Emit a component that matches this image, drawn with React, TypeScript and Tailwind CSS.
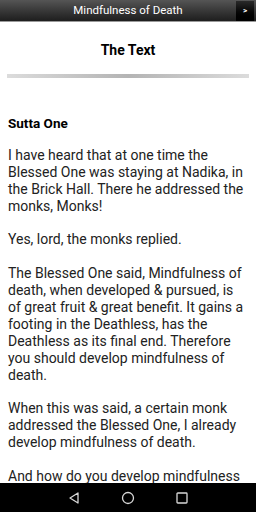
export default function App() {
  const paragraphs = [
    'I have heard that at one time the Blessed One was staying at Nadika, in the Brick Hall. There he addressed the monks, Monks!',
    'Yes, lord, the monks replied.',
    'The Blessed One said, Mindfulness of death, when developed & pursued, is of great fruit & great benefit. It gains a footing in the Deathless, has the Deathless as its final end. Therefore you should develop mindfulness of death.',
    'When this was said, a certain monk addressed the Blessed One, I already develop mindfulness of death.',
    'And how do you develop mindfulness of death?',
  ];

  return (
    <div className="flex h-[512px] w-[256px] flex-col overflow-hidden bg-white font-['Roboto',sans-serif]">
      <div className="relative flex h-[22px] shrink-0 items-center justify-center border-b border-[#9a9a9a] bg-gradient-to-b from-[#555555] to-[#1e1e1e]">
        <span className="text-[11.5px] leading-none text-white">Mindfulness of Death</span>
        <button className="absolute right-[2px] top-[1px] flex h-[20px] w-[18px] items-center justify-center bg-gradient-to-b from-[#2a2a2a] to-[#000000] text-[8px] font-bold text-white">
          &gt;
        </button>
      </div>

      <div className="flex-1 overflow-hidden">
        <h1 className="pt-[19px] text-center text-[14px] font-bold leading-[18px] text-black">The Text</h1>
        <div className="mx-[7px] mt-[15px] h-[4px] bg-gradient-to-r from-[#dcdcdc] via-[#b4b4b4] to-[#dcdcdc]" />

        <div className="px-[8px] pt-[37px] text-[14px] leading-[16.9px] text-[#222222]">
          <h2 className="mb-[15px] text-[13.5px] font-bold text-black">Sutta One</h2>
          {paragraphs.map((p, i) => (
            <p key={i} className="mb-[16.9px]">
              {p}
            </p>
          ))}
        </div>
      </div>

      <div className="flex h-[29px] shrink-0 items-center justify-center gap-[40px] bg-black">
        <svg width="14" height="14" viewBox="0 0 14 14" fill="none" stroke="#d8d8d8" strokeWidth="1.3">
          <path d="M11 2 L3 7 L11 12 Z" strokeLinejoin="round" />
        </svg>
        <svg width="14" height="14" viewBox="0 0 14 14" fill="none" stroke="#d8d8d8" strokeWidth="1.3">
          <circle cx="7" cy="7" r="5.5" />
        </svg>
        <svg width="14" height="14" viewBox="0 0 14 14" fill="none" stroke="#d8d8d8" strokeWidth="1.3">
          <rect x="2" y="2" width="10" height="10" rx="0.8" />
        </svg>
      </div>
    </div>
  );
}
